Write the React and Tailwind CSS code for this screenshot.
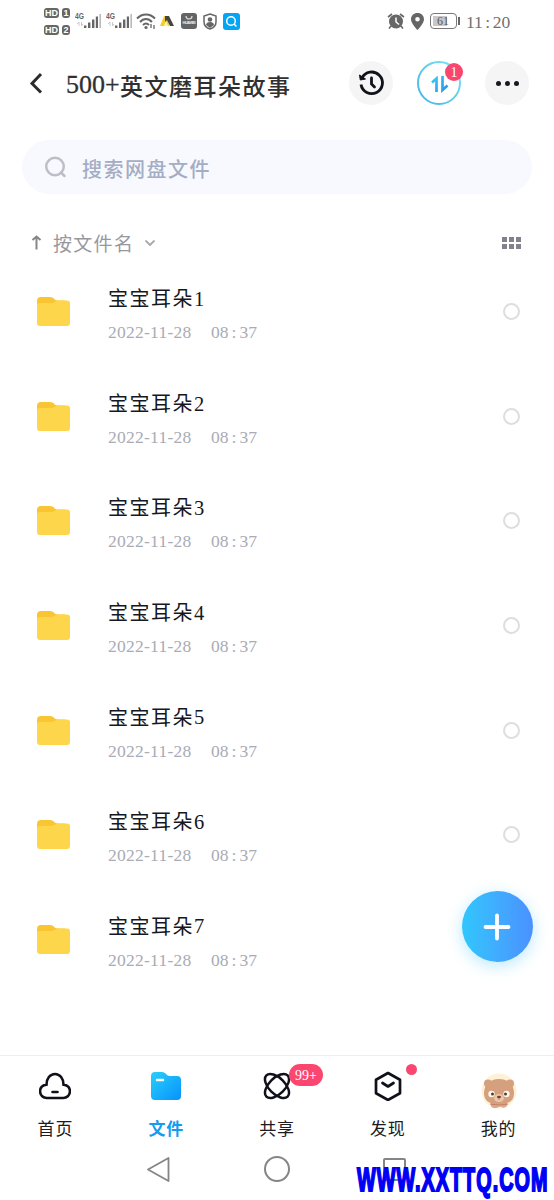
const files = [1, 2, 3, 4, 5, 6, 7];

function Signal() {
  return (
    <svg width="27" height="22" viewBox="0 0 27 22" className="shrink-0">
      <text x="0" y="9" fontSize="9" fontWeight="bold" textLength="9" lengthAdjust="spacingAndGlyphs" fill="#666" fontFamily="Liberation Sans, sans-serif">4G</text>
      <g fill="#666">
        <path d="M9 15.500h2.400V18H9zM13 12.500h2.400V18H13zM17 9.500h2.400V18H17z" />
        <path d="M20.800 6.500h2.200V18h-2.200z" />
        <path d="M24.500 4h1.300v14h-1.300z" fill="#aaa" />
      </g>
      <path d="M2 14l2-2v4M6.500 12v4l1.500-2" fill="none" stroke="#ccc" />
    </svg>
  );
}

function HdBadges() {
  return (
    <div className="flex w-[27px] flex-col gap-[7px]">
      {[1, 2].map((n) => (
        <div key={n} className="flex h-[10px] gap-[3px] text-[9px] leading-[10px] font-bold text-white">
          <span className="w-[15px] rounded-[3px] bg-[#666] text-center">HD</span>
          <span className="w-[8px] rounded-[3px] bg-[#666] text-center">{n}</span>
        </div>
      ))}
    </div>
  );
}

function StatusBar() {
  return (
    <div className="flex h-[42px] items-center pr-[44px] pl-[44px] font-['Liberation_Sans',sans-serif]">
      <HdBadges />
      <div className="ml-[4px] flex gap-[4px]">
        <Signal />
        <Signal />
      </div>
      <svg width="21" height="18" viewBox="0 0 21 18" className="ml-[3px]" fill="none" stroke="#666" strokeWidth="2">
        <path d="M1 6.500C6 1 14 1 19 6.500M4 10c3.500-4 8.500-4 12 0M7 13c2-2 4-2 6 0" />
        <circle cx="10" cy="15.500" r="1.600" fill="#666" stroke="none" />
        <path d="M15 12v4M18 13v4" strokeWidth="1.300" />
      </svg>
      <svg width="15" height="12" viewBox="0 0 15 12" className="ml-[3px]">
        <path d="M4 1h4l1 10H0z" fill="#f3cf2b" />
        <path d="M5 1h4l5 10h-4L7 5 5 7z" fill="#444" />
        <path d="M6 6l2 5H4z" fill="#fff3b5" />
      </svg>
      <svg width="16" height="16" viewBox="0 0 16 16" className="ml-[6px]">
        <rect width="16" height="16" rx="3" fill="#646464" />
        <path d="M5 3c0 4 6 4 6 0" fill="none" stroke="#ddd" strokeWidth="1.200" />
        <text x="1.500" y="11" fontSize="4" fontWeight="bold" textLength="13" fill="#eee">HUAWEI</text>
      </svg>
      <svg width="14" height="17" viewBox="0 0 14 17" className="ml-[6px]">
        <path d="M7 1l6 2v6c0 4-3 6-6 7-3-1-6-3-6-7V3z" fill="none" stroke="#666" strokeWidth="1.500" />
        <circle cx="7" cy="6.500" r="2.300" fill="#666" />
        <path d="M3 12c0-4 8-4 8 0l-4 3z" fill="#666" />
      </svg>
      <svg width="17" height="17" viewBox="0 0 17 17" className="ml-[6px]">
        <rect width="17" height="17" rx="3" fill="#05a5f5" />
        <circle cx="8" cy="8" r="4.300" fill="none" stroke="#fff" strokeWidth="1.500" />
        <path d="M11 11l2.500 2.500" stroke="#fff" strokeWidth="1.500" />
      </svg>
      <svg width="18" height="18" viewBox="0 0 18 18" className="ml-auto">
        <circle cx="9" cy="9.500" r="7" fill="#666" />
        <path d="M1 5l4-3M13 2l4 3M4 14l-2 2.500M14 14l2 2.500" stroke="#666" strokeWidth="1.600" />
        <path d="M9 5.500V10l3 2.500" fill="none" stroke="#fff" strokeWidth="1.500" />
      </svg>
      <svg width="13" height="17" viewBox="0 0 13 17" className="ml-[6px]">
        <path fillRule="evenodd" d="M6.500 0C2.700 0 0 2.700 0 6.200 0 10.500 6.500 17 6.500 17S13 10.500 13 6.200C13 2.700 10.300 0 6.500 0zm0 4a2.300 2.300 0 1 1 0 4.600 2.300 2.300 0 0 1 0-4.600z" fill="#666" />
      </svg>
      <div className="ml-[6px] flex h-[16px] w-[27px] items-center rounded-[4px] border-[1.5px] border-[#777] p-[2px]">
        <div className="flex h-full w-[14px] items-center bg-[#c8c8c8] pl-[4px] font-['Liberation_Serif',serif] text-[12px] text-[#555]">61</div>
      </div>
      <div className="ml-[1px] h-[8px] w-[2px] bg-[#666]" />
      <div className="ml-[6px] w-[44px] pt-[2px] font-['Liberation_Serif',serif] text-[17.5px] text-[#707070]">
        11<span className="px-[2.500px]">:</span>20
      </div>
    </div>
  );
}

function Header() {
  return (
    <div className="flex h-[82px] items-center pr-[25px] pl-[29px]">
      <svg width="14" height="22" viewBox="0 0 14 22" fill="none" stroke="#2c2c2c" strokeWidth="3">
        <path d="M12 2L3 11.500l9 9" />
      </svg>
      <h1 className="ml-[23px] flex items-center pt-[3px] whitespace-nowrap text-[#303030]">
        <span className="w-[54px] font-['Liberation_Serif',serif] text-[26px] leading-[30px] [-webkit-text-stroke:0.3px_#303030]">500+</span>
        <span className="text-[23px] leading-[30px] font-medium tracking-[1.5px]">英文磨耳朵故事</span>
      </h1>
      <div className="ml-auto flex gap-[24px]">
        <div className="flex size-[44px] items-center justify-center rounded-full bg-[#f5f5f6]">
          <svg width="28" height="28" viewBox="0 0 28 28" fill="none" stroke="#11131c" strokeWidth="2.800">
            <path d="M5 9A10.800 10.800 0 1 1 4 15.500" />
            <path d="M2.500 6l.8 5 5.200-1z" fill="#11131c" strokeWidth="1" />
            <path d="M14.500 9v6l3 3" strokeLinecap="round" />
          </svg>
        </div>
        <div className="relative size-[44px]">
          <svg width="44" height="44" viewBox="0 0 44 44" fill="none">
            <defs>
              <linearGradient id="ring" x1="0" y1="1" x2="1" y2="0">
                <stop stopColor="#45b3e3" />
                <stop offset="1" stopColor="#7ce4f8" />
              </linearGradient>
              <linearGradient id="transfer" x1="0" y1="0" x2="1" y2="1">
                <stop stopColor="#39d0f5" />
                <stop offset="1" stopColor="#278dea" />
              </linearGradient>
            </defs>
            <circle cx="22" cy="22" r="21" stroke="url(#ring)" strokeWidth="2" />
            <path d="M15 21.500l4.500-4V31M25.500 15V29l5-4.500" stroke="url(#transfer)" strokeWidth="2.700" />
          </svg>
          <span className="absolute top-[2px] left-[28px] flex size-[18px] items-center justify-center rounded-full bg-[#fa466e] pt-[1px] font-['Liberation_Serif',serif] text-[14px] text-white">1</span>
        </div>
        <div className="flex size-[44px] items-center justify-center gap-[4px] rounded-full bg-[#f5f5f6]">
          <i className="size-[5px] rounded-full bg-[#171821]" />
          <i className="size-[5px] rounded-full bg-[#171821]" />
          <i className="size-[5px] rounded-full bg-[#171821]" />
        </div>
      </div>
    </div>
  );
}

function FileRow({ n }) {
  return (
    <div className="flex h-[104.6px] items-center pr-[34px] pl-[37px]">
      <svg width="33" height="29" viewBox="0 0 33 29">
        <path d="M0 4a4 4 0 0 1 4-4h9c4 0 4 3.500 8 3.500h7v10H0z" fill="#f9c532" />
        <path d="M0 8q0-2 3-2h11c4 0 4-2.500 7-2.500h9a3 3 0 0 1 3 3V26a3 3 0 0 1-3 3H3a3 3 0 0 1-3-3z" fill="#fed64b" />
      </svg>
      <div className="ml-[38px] pt-[7px]">
        <div className="flex h-[30px] items-center text-[#151722]">
          <span className="text-[20px] tracking-[1.5px]">宝宝耳朵</span>
          <span className="pt-[2px] font-['Liberation_Serif',serif] text-[20.5px]">{n}</span>
        </div>
        <div className="mt-[4px] flex h-[30px] items-center font-['Liberation_Serif',serif] text-[17.5px] text-[#a9abb5]">
          <span className="w-[103px] tracking-[0.25px]">2022-11-28</span>
          <span>08<span className="px-[3px]">:</span>37</span>
        </div>
      </div>
      <div className="ml-auto size-[17px] rounded-full border-[2.5px] border-[#dedee0]" />
    </div>
  );
}

function CloudIcon() {
  return (
    <svg width="32" height="28" viewBox="0 0 32 28" fill="none" stroke="#10111a" strokeWidth="2.600" strokeLinecap="round">
      <path d="M8 26a6.700 6.700 0 0 1-.5-13.400C7.500 6.500 11 2 16 2s8.500 4.500 8.500 10.600A6.700 6.700 0 0 1 24 26z" />
      <path d="M13.500 20h5" />
    </svg>
  );
}

function FolderIcon() {
  return (
    <svg width="30" height="28" viewBox="0 0 30 28">
      <defs>
        <linearGradient id="folder" x1="0" y1="0" x2="1" y2="1">
          <stop stopColor="#2acffb" />
          <stop offset="1" stopColor="#0692fb" />
        </linearGradient>
      </defs>
      <path d="M0 4a4 4 0 0 1 4-4h7c4 0 4 4 8 4h7a4 4 0 0 1 4 4v16a4 4 0 0 1-4 4H4a4 4 0 0 1-4-4z" fill="url(#folder)" />
      <path d="M6 8h6" stroke="#fff" strokeWidth="2.500" strokeLinecap="round" />
    </svg>
  );
}

function ShareIcon() {
  return (
    <svg width="28" height="28" viewBox="0 0 28 28" fill="none" stroke="#10111a" strokeWidth="2.500">
      <ellipse cx="14" cy="14" rx="15" ry="8" transform="rotate(45 14 14)" />
      <ellipse cx="14" cy="14" rx="15" ry="8" transform="rotate(-45 14 14)" />
    </svg>
  );
}

function DiscoverIcon() {
  return (
    <svg width="28" height="30" viewBox="0 0 28 30" fill="none" stroke="#10111a" strokeWidth="2.700" strokeLinejoin="round" strokeLinecap="round">
      <path d="M14 2l12 6.700v13.600L14 29 2 22.300V8.700z" />
      <path d="M8.500 12l5.500 3.500 5.500-3.500" />
    </svg>
  );
}

function BearAvatar() {
  return (
    <svg width="36" height="36" viewBox="0 0 36 36">
      <circle cx="18" cy="18" r="17.500" fill="#fff1d5" />
      <path d="M10 29h16v4q-3 3-7 .5-6 3.500-9 0z" fill="#dda88a" />
      <g fill="#d4a07e">
        <circle cx="7" cy="10.500" r="4" />
        <circle cx="29" cy="10.500" r="4" />
        <path d="M18 6c9 0 15 6 15 14s-5 11-15 11S3 28 3 20 9 6 18 6z" />
      </g>
      <ellipse cx="18" cy="25" rx="5" ry="4" fill="#edc6aa" />
      <circle cx="10.500" cy="21" r="3.200" fill="#fff6ec" />
      <circle cx="25.500" cy="21" r="3.200" fill="#fff6ec" />
      <circle cx="11.500" cy="21" r="1.500" fill="#573a30" />
      <circle cx="24.500" cy="21" r="1.500" fill="#573a30" />
      <ellipse cx="18" cy="24" rx="2" ry="1.300" fill="#6a4435" />
      <path d="M18 25v2M9 31q9 2 18 0" fill="none" stroke="#bc8069" />
    </svg>
  );
}

function Tab({ label, active, badge, children }) {
  return (
    <div className="flex flex-1 flex-col items-center">
      <div className="relative flex h-[60px] items-center">
        {children}
        {badge}
      </div>
      <span className={active ? "text-[17px] leading-[24px] font-bold tracking-[0.8px] text-[#159cf0]" : "text-[17px] leading-[24px] tracking-[0.8px] text-[#1b1c24]"}>
        {label}
      </span>
    </div>
  );
}

export default function App() {
  return (
    <div className="relative flex h-[1200px] w-[554px] flex-col overflow-hidden bg-white font-['Noto_Sans_CJK_SC',sans-serif]">
      <StatusBar />
      <Header />
      <div className="mx-[22px] mt-[16px] flex h-[54px] shrink-0 items-center rounded-full bg-[#f8f9fe] pl-[22px]">
        <svg width="24" height="24" viewBox="0 0 24 24" fill="none" stroke="#bcbfc8" strokeWidth="2.500">
          <circle cx="11" cy="11.500" r="8.800" />
          <path d="M17 17.500l3.500 3.500" strokeLinecap="round" />
        </svg>
        <span className="ml-[14px] pt-[4px] text-[20px] font-medium tracking-[1.5px] text-[#a3adc4]">搜索网盘文件</span>
      </div>
      <div className="mt-[32px] flex h-[34px] shrink-0 items-center pr-[33px] pl-[31px]">
        <svg width="11" height="16" viewBox="0 0 11 16" fill="none" stroke="#85868c" strokeWidth="2">
          <path d="M5.500 14.500V1.500M1.500 5l4-3.500 4 3.500" />
        </svg>
        <span className="ml-[11px] text-[19px] tracking-[1.3px] text-[#97989d]">按文件名</span>
        <svg width="10" height="6" viewBox="0 0 10 6" className="ml-[11px]" fill="none" stroke="#a6a6aa" strokeWidth="1.800">
          <path d="M.5.500L5 5 9.500.500" />
        </svg>
        <div className="ml-auto grid grid-cols-3 gap-[2px]">
          {[0, 1, 2, 3, 4, 5].map((i) => (
            <i key={i} className="size-[5px] bg-[#81828e]" />
          ))}
        </div>
      </div>
      <div className="mt-[-0.5px] flex-1">
        {files.map((n) => (
          <FileRow key={n} n={n} />
        ))}
      </div>

      <div className="flex h-[90px] shrink-0 border-t border-[#eceeef]">
        <Tab label="首页"><CloudIcon /></Tab>
        <Tab label="文件" active><FolderIcon /></Tab>
        <Tab
          label="共享"
          badge={<span className="absolute top-[8px] left-[26px] flex h-[22px] w-[34px] items-center justify-center rounded-full bg-[#fb4770] pt-[1px] font-['Liberation_Serif',serif] text-[14px] text-white">99+</span>}
        >
          <ShareIcon />
        </Tab>
        <Tab label="发现" badge={<span className="absolute top-[8px] left-[32px] size-[11px] rounded-full bg-[#fb4770]" />}>
          <DiscoverIcon />
        </Tab>
        <Tab label="我的"><div className="pt-[10px]"><BearAvatar /></div></Tab>
      </div>
      <div className="flex h-[55px] shrink-0 items-center justify-between pr-[148px] pb-[7px] pl-[146px]">
        <svg width="25" height="27" viewBox="0 0 25 27" fill="none" stroke="#858585" strokeWidth="1.800" strokeLinejoin="round">
          <path d="M22.500 2v23L2 13.500z" />
        </svg>
        <div className="size-[26px] rounded-full border-2 border-[#858585]" />
        <div className="size-[23px] rounded-[2px] border-2 border-[#858585]" />
      </div>

      <button className="absolute top-[891px] left-[461.5px] flex size-[71px] items-center justify-center rounded-full bg-linear-to-r from-[#30c6fd] to-[#4a91ff] shadow-[0_4px_16px_#32bdff55]">
        <svg width="28" height="28" viewBox="0 0 28 28" stroke="#fff" strokeWidth="3.800" strokeLinecap="round">
          <path d="M14 2.500v23M2.500 14h23" />
        </svg>
      </button>
      <div className="absolute top-[1160px] left-[357px] origin-left scale-x-[0.6] font-['Liberation_Sans',sans-serif] text-[33px] leading-[40px] font-bold tracking-[1.7px] whitespace-nowrap text-[#0000f5] [-webkit-text-stroke:2px_#0000f5]">
        WWW.XXTTQ.COM
      </div>
    </div>
  );
}
